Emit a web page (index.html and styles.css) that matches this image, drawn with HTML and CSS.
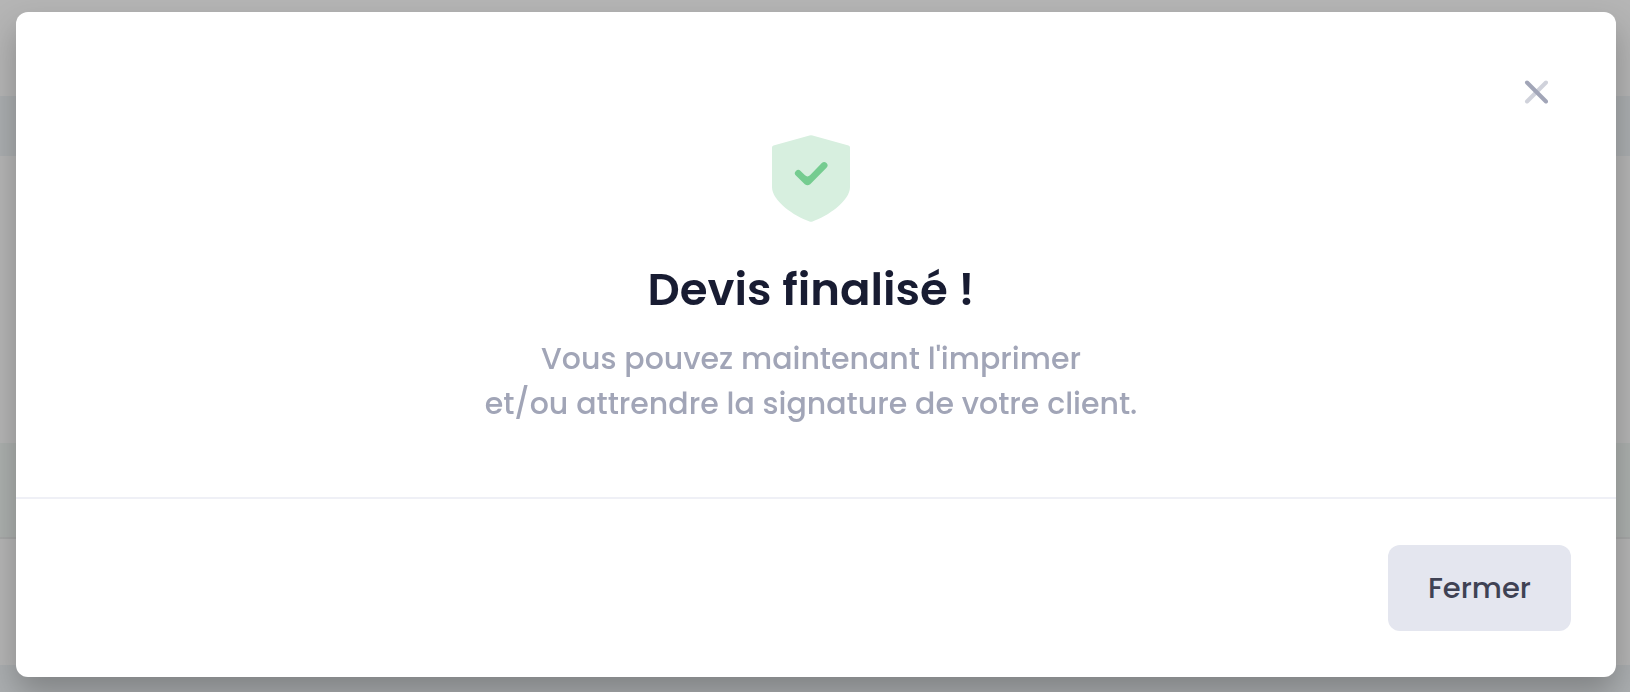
FILE: index.html
```html
<!DOCTYPE html>
<html lang="fr">
<head>
    <meta charset="UTF-8">
    <meta name="viewport" content="width=device-width, initial-scale=1.0">
    <title>Devis</title>
    <link rel="stylesheet" href="styles.css">
</head>
<body>
    <!-- Page behind the modal -->
    <div class="page">
        <div class="page-top"></div>
        <div class="page-header"></div>
        <div class="page-content"></div>
        <div class="page-notice"></div>
        <div class="page-actions"></div>
        <div class="page-footer"></div>
    </div>

    <div class="backdrop">
        <div class="modal" role="dialog" aria-modal="true" aria-labelledby="modal-title">
            <div class="modal-body">
                <button type="button" class="close" aria-label="Fermer la fenêtre">
                    <svg width="24" height="24" viewBox="0 0 24 24" fill="none" stroke="#a1a5b7" stroke-width="4" stroke-linecap="round">
                        <path d="M22 2.500L3 21.500" stroke="#d0d2db"/>
                        <path d="M3 2.500L22 21.500"/>
                    </svg>
                </button>
                <svg class="shield" width="78" height="87" viewBox="0 0 78 87">
                    <path fill="#d7efdf" d="M37.500 .4Q39 0 40.500 .4L76.500 10.600Q78 11 78 12.500V52C78 66 56 81 40.500 86.500Q39 87 37.500 86.500C22 81 0 66 0 52V12.500Q0 11 1.500 10.600Z"/>
                    <path fill="#75cc90" d="M23.900 40.600A3.300 3.300 0 0 1 28.600 35.900L33 40.300Q35.500 42.600 38 40.300L49.800 28.100A3.300 3.300 0 0 1 54.500 32.800L38.200 49.200Q35.500 51.400 32.800 49.200Z"/>
                </svg>
                <h1 class="title" id="modal-title">Devis finalisé !</h1>
                <p class="message">Vous pouvez maintenant l'imprimer<br>et/ou attrendre la signature de votre client.</p>
            </div>
            <div class="modal-footer">
                <button type="button" class="button">Fermer</button>
            </div>
        </div>
    </div>
</body>
</html>
```

FILE: styles.css
```css
* {
    box-sizing: border-box;
}

body {
    margin: 0;
    font-family: Poppins, Inter, sans-serif;
    background-color: #b5b5b5;
}

.page {
    display: flex;
    flex-direction: column;
    height: 100vh;
}

.page-top {
    height: 96px;
}

.page-header {
    height: 60px;
    background-color: #abaeb0;
}

.page-content {
    height: 287px;
}

.page-notice {
    height: 96px;
    background-color: #acb0ae;
    border-bottom: 2px solid #a7a8a8;
}

.page-actions {
    height: 126px;
}

.page-footer {
    flex: 1;
    background-color: #abaeb0;
}

.backdrop {
    position: fixed;
    inset: 0;
    padding: 12px 14px 16px 16px;
}

.modal {
    background-color: #fff;
    border-radius: 12px;
    box-shadow: 0 16px 32px rgba(0, 0, 0, 0.25);
}

.modal-body {
    position: relative;
    display: flex;
    flex-direction: column;
    align-items: center;
    padding: 123px 40px 71px 30px;
    border-bottom: 2px solid #eff0f6;
}

.close {
    position: absolute;
    top: 56px;
    right: 56px;
    width: 48px;
    height: 48px;
    padding: 12px;
    border: none;
    background: none;
    cursor: pointer;
}

.close svg {
    display: block;
}

.title {
    margin: 36px 0 14px;
    font-size: 45px;
    font-weight: 600;
    line-height: 64px;
    color: #181c32;
}

.message {
    margin: 0;
    font-size: 30px;
    font-weight: 500;
    line-height: 45px;
    text-align: center;
    color: #a1a5b7;
}

.modal-footer {
    display: flex;
    justify-content: flex-end;
    padding: 46px 45px;
}

.button {
    height: 86px;
    padding: 0 40px;
    border: none;
    border-radius: 12px;
    background-color: #e4e6ef;
    font-family: inherit;
    font-size: 29px;
    font-weight: 500;
    color: #3f4254;
    cursor: pointer;
}
```
